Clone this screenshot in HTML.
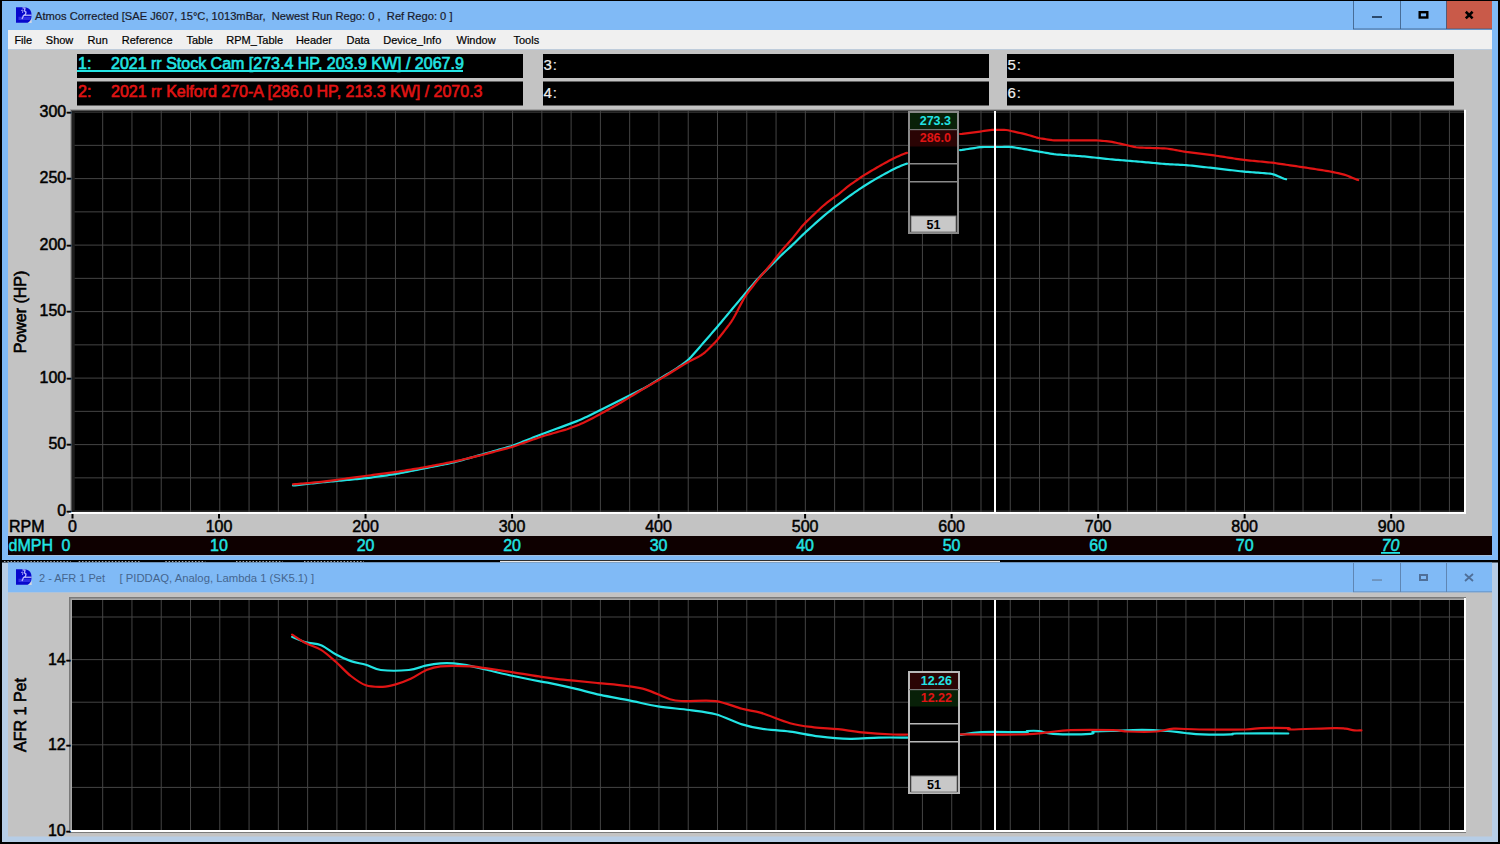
<!DOCTYPE html>
<html><head><meta charset="utf-8"><style>
html,body{margin:0;padding:0;width:1500px;height:844px;overflow:hidden;background:#000}
body{position:relative;font-family:"Liberation Sans",sans-serif}
svg text{font-family:"Liberation Sans",sans-serif}
.m{position:absolute;top:33px;font-size:11px;color:#000;white-space:pre;line-height:14px;-webkit-text-stroke:0.2px #000}
.t{position:absolute;white-space:pre}
</style></head><body>
<svg style="position:absolute;left:0;top:0" width="1500" height="844" viewBox="0 0 1500 844">
<rect x="0" y="0" width="1500" height="844" fill="#000"/>
<rect x="2" y="1" width="1496" height="559" fill="#80baf6"/>
<rect x="1446" y="1" width="46" height="28" fill="#c95a49"/>
<rect x="1353" y="1" width="1" height="28" fill="#3a5a80" opacity="0.8"/>
<rect x="1400" y="1" width="1" height="28" fill="#3a5a80" opacity="0.8"/>
<rect x="1446" y="1" width="1" height="28" fill="#3a5a80" opacity="0.8"/>
<rect x="1353" y="28.5" width="139" height="1" fill="#3a5a80" opacity="0.8"/>
<rect x="1372" y="16" width="10" height="2" fill="#2b4a6e"/>
<rect x="1419.7" y="12.2" width="7.6" height="5.3" fill="none" stroke="#000" stroke-width="2.4"/>
<path d="M1465.8 11.8 L1472.6 18.4 M1472.6 11.8 L1465.8 18.4" stroke="#000" stroke-width="2.6"/>
<rect x="8" y="30" width="1484" height="19.5" fill="#f0f0f0"/>
<rect x="8" y="49.5" width="1484" height="506" fill="#c3c3c3"/>
<rect x="77" y="54" width="446" height="24" fill="#000"/>
<rect x="77" y="81.5" width="446" height="24" fill="#000"/>
<rect x="543" y="54" width="446" height="24" fill="#000"/>
<rect x="543" y="81.5" width="446" height="24" fill="#000"/>
<rect x="1007" y="54" width="447" height="24" fill="#000"/>
<rect x="1007" y="81.5" width="447" height="24" fill="#000"/>
<rect x="70" y="109" width="1396" height="405" fill="#a0a0a0"/>
<rect x="71" y="110" width="1394" height="403" fill="#555"/>
<rect x="72" y="111" width="1392" height="401" fill="#000"/>
<rect x="1464" y="109.5" width="2" height="404.5" fill="#fff"/>
<rect x="69" y="512" width="1397" height="2" fill="#fff"/>
<rect x="102.18" y="111" width="1" height="401" fill="#444444"/>
<rect x="131.45" y="111" width="1" height="401" fill="#444444"/>
<rect x="160.73" y="111" width="1" height="401" fill="#444444"/>
<rect x="190.01" y="111" width="1" height="401" fill="#444444"/>
<rect x="219.28" y="111" width="1" height="401" fill="#444444"/>
<rect x="248.56" y="111" width="1" height="401" fill="#444444"/>
<rect x="277.84" y="111" width="1" height="401" fill="#444444"/>
<rect x="307.12" y="111" width="1" height="401" fill="#444444"/>
<rect x="336.39" y="111" width="1" height="401" fill="#444444"/>
<rect x="365.67" y="111" width="1" height="401" fill="#444444"/>
<rect x="394.95" y="111" width="1" height="401" fill="#444444"/>
<rect x="424.22" y="111" width="1" height="401" fill="#444444"/>
<rect x="453.50" y="111" width="1" height="401" fill="#444444"/>
<rect x="482.78" y="111" width="1" height="401" fill="#444444"/>
<rect x="512.06" y="111" width="1" height="401" fill="#444444"/>
<rect x="541.33" y="111" width="1" height="401" fill="#444444"/>
<rect x="570.61" y="111" width="1" height="401" fill="#444444"/>
<rect x="599.89" y="111" width="1" height="401" fill="#444444"/>
<rect x="629.16" y="111" width="1" height="401" fill="#444444"/>
<rect x="658.44" y="111" width="1" height="401" fill="#444444"/>
<rect x="687.72" y="111" width="1" height="401" fill="#444444"/>
<rect x="716.99" y="111" width="1" height="401" fill="#444444"/>
<rect x="746.27" y="111" width="1" height="401" fill="#444444"/>
<rect x="775.55" y="111" width="1" height="401" fill="#444444"/>
<rect x="804.83" y="111" width="1" height="401" fill="#444444"/>
<rect x="834.10" y="111" width="1" height="401" fill="#444444"/>
<rect x="863.38" y="111" width="1" height="401" fill="#444444"/>
<rect x="892.66" y="111" width="1" height="401" fill="#444444"/>
<rect x="921.93" y="111" width="1" height="401" fill="#444444"/>
<rect x="951.21" y="111" width="1" height="401" fill="#444444"/>
<rect x="980.49" y="111" width="1" height="401" fill="#444444"/>
<rect x="1009.76" y="111" width="1" height="401" fill="#444444"/>
<rect x="1039.04" y="111" width="1" height="401" fill="#444444"/>
<rect x="1068.32" y="111" width="1" height="401" fill="#444444"/>
<rect x="1097.60" y="111" width="1" height="401" fill="#444444"/>
<rect x="1126.87" y="111" width="1" height="401" fill="#444444"/>
<rect x="1156.15" y="111" width="1" height="401" fill="#444444"/>
<rect x="1185.43" y="111" width="1" height="401" fill="#444444"/>
<rect x="1214.70" y="111" width="1" height="401" fill="#444444"/>
<rect x="1243.98" y="111" width="1" height="401" fill="#444444"/>
<rect x="1273.26" y="111" width="1" height="401" fill="#444444"/>
<rect x="1302.53" y="111" width="1" height="401" fill="#444444"/>
<rect x="1331.81" y="111" width="1" height="401" fill="#444444"/>
<rect x="1361.09" y="111" width="1" height="401" fill="#444444"/>
<rect x="1390.37" y="111" width="1" height="401" fill="#444444"/>
<rect x="1419.64" y="111" width="1" height="401" fill="#444444"/>
<rect x="1448.92" y="111" width="1" height="401" fill="#444444"/>
<rect x="72" y="111.60" width="1392" height="1" fill="#444444"/>
<rect x="72" y="144.85" width="1392" height="1" fill="#444444"/>
<rect x="72" y="178.10" width="1392" height="1" fill="#444444"/>
<rect x="72" y="211.35" width="1392" height="1" fill="#444444"/>
<rect x="72" y="244.60" width="1392" height="1" fill="#444444"/>
<rect x="72" y="277.85" width="1392" height="1" fill="#444444"/>
<rect x="72" y="311.10" width="1392" height="1" fill="#444444"/>
<rect x="72" y="344.35" width="1392" height="1" fill="#444444"/>
<rect x="72" y="377.60" width="1392" height="1" fill="#444444"/>
<rect x="72" y="410.85" width="1392" height="1" fill="#444444"/>
<rect x="72" y="444.10" width="1392" height="1" fill="#444444"/>
<rect x="72" y="477.35" width="1392" height="1" fill="#444444"/>
<rect x="72" y="510.60" width="1392" height="1" fill="#444444"/>
<rect x="71" y="110" width="1" height="402" fill="#555"/>
<rect x="72" y="111" width="2.7" height="401" fill="#1e1e1e"/>
<polyline points="293.0,485.46 295.0,485.32 297.0,485.13 299.0,484.91 301.0,484.68 303.0,484.45 305.0,484.22 307.0,483.99 309.0,483.76 311.0,483.53 313.0,483.30 315.0,483.08 317.0,482.85 319.0,482.63 321.0,482.42 323.0,482.22 325.0,482.03 327.0,481.84 329.0,481.66 331.0,481.47 333.0,481.28 335.0,481.09 337.0,480.91 339.0,480.72 341.0,480.53 343.0,480.34 345.0,480.16 347.0,479.97 349.0,479.78 351.0,479.59 353.0,479.41 355.0,479.22 357.0,479.03 359.0,478.84 361.0,478.66 363.0,478.47 365.0,478.27 367.0,478.06 369.0,477.82 371.0,477.56 373.0,477.28 375.0,477.00 377.0,476.71 379.0,476.43 381.0,476.14 383.0,475.86 385.0,475.57 387.0,475.29 389.0,475.00 391.0,474.71 393.0,474.41 395.0,474.10 397.0,473.76 399.0,473.39 401.0,473.00 403.0,472.60 405.0,472.20 407.0,471.80 409.0,471.40 411.0,471.00 413.0,470.60 415.0,470.20 417.0,469.80 419.0,469.40 421.0,469.00 423.0,468.60 425.0,468.20 427.0,467.80 429.0,467.40 431.0,467.00 433.0,466.60 435.0,466.20 437.0,465.80 439.0,465.40 441.0,465.00 443.0,464.60 445.0,464.20 447.0,463.80 449.0,463.40 451.0,462.98 453.0,462.54 455.0,462.06 457.0,461.53 459.0,460.98 461.0,460.42 463.0,459.86 465.0,459.29 467.0,458.72 469.0,458.16 471.0,457.59 473.0,457.03 475.0,456.46 477.0,455.90 479.0,455.33 481.0,454.77 483.0,454.20 485.0,453.63 487.0,453.07 489.0,452.50 491.0,451.94 493.0,451.37 495.0,450.81 497.0,450.24 499.0,449.68 501.0,449.11 503.0,448.54 505.0,447.98 507.0,447.41 509.0,446.82 511.0,446.19 513.0,445.51 515.0,444.77 517.0,443.99 519.0,443.20 521.0,442.40 523.0,441.60 525.0,440.80 527.0,440.00 529.0,439.20 531.0,438.40 533.0,437.60 535.0,436.80 537.0,436.00 539.0,435.21 541.0,434.43 543.0,433.67 545.0,432.93 547.0,432.20 549.0,431.47 551.0,430.75 553.0,430.03 555.0,429.30 557.0,428.58 559.0,427.85 561.0,427.11 563.0,426.37 565.0,425.62 567.0,424.87 569.0,424.12 571.0,423.37 573.0,422.62 575.0,421.87 577.0,421.10 579.0,420.30 581.0,419.44 583.0,418.54 585.0,417.60 587.0,416.65 589.0,415.69 591.0,414.73 593.0,413.76 595.0,412.78 597.0,411.79 599.0,410.80 601.0,409.80 603.0,408.80 605.0,407.80 607.0,406.80 609.0,405.80 611.0,404.80 613.0,403.80 615.0,402.80 617.0,401.80 619.0,400.80 621.0,399.80 623.0,398.80 625.0,397.81 627.0,396.81 629.0,395.81 631.0,394.82 633.0,393.82 635.0,392.83 637.0,391.83 639.0,390.83 641.0,389.83 643.0,388.80 645.0,387.71 647.0,386.57 649.0,385.36 651.0,384.13 653.0,382.88 655.0,381.63 657.0,380.38 659.0,379.14 661.0,377.92 663.0,376.70 665.0,375.49 667.0,374.28 669.0,373.08 671.0,371.87 673.0,370.65 675.0,369.40 677.0,368.10 679.0,366.74 681.0,365.34 683.0,363.90 685.0,362.40 687.0,360.77 689.0,358.94 691.0,356.90 693.0,354.72 695.0,352.47 697.0,350.20 699.0,347.92 701.0,345.64 703.0,343.34 705.0,341.05 707.0,338.75 709.0,336.44 711.0,334.14 713.0,331.83 715.0,329.51 717.0,327.17 719.0,324.81 721.0,322.42 723.0,320.03 725.0,317.63 727.0,315.23 729.0,312.84 731.0,310.44 733.0,308.05 735.0,305.66 737.0,303.27 739.0,300.88 741.0,298.50 743.0,296.11 745.0,293.73 747.0,291.36 749.0,289.00 751.0,286.67 753.0,284.37 755.0,282.10 757.0,279.85 759.0,277.64 761.0,275.50 763.0,273.43 765.0,271.41 767.0,269.40 769.0,267.40 771.0,265.40 773.0,263.40 775.0,261.40 777.0,259.41 779.0,257.44 781.0,255.51 783.0,253.63 785.0,251.80 787.0,249.98 789.0,248.17 791.0,246.32 793.0,244.42 795.0,242.48 797.0,240.50 799.0,238.51 801.0,236.55 803.0,234.63 805.0,232.75 807.0,230.92 809.0,229.10 811.0,227.29 813.0,225.48 815.0,223.68 817.0,221.88 819.0,220.09 821.0,218.32 823.0,216.57 825.0,214.88 827.0,213.24 829.0,211.64 831.0,210.05 833.0,208.49 835.0,206.96 837.0,205.46 839.0,203.97 841.0,202.47 843.0,200.94 845.0,199.41 847.0,197.90 849.0,196.43 851.0,195.01 853.0,193.59 855.0,192.19 857.0,190.79 859.0,189.40 861.0,188.04 863.0,186.73 865.0,185.46 867.0,184.23 869.0,183.02 871.0,181.81 873.0,180.60 875.0,179.41 877.0,178.23 879.0,177.09 881.0,175.97 883.0,174.87 885.0,173.77 887.0,172.68 889.0,171.60 891.0,170.54 893.0,169.52 895.0,168.55 897.0,167.62 899.0,166.72 901.0,165.83 903.0,164.98 905.0,164.23 907.0,163.67" fill="none" stroke="#22e4e4" stroke-width="2.2" stroke-linejoin="round" stroke-linecap="round"/>
<polyline points="960.1,150.08 962.1,149.87 964.1,149.59 966.1,149.28 968.1,148.98 970.1,148.67 972.1,148.36 974.1,148.06 976.1,147.75 978.1,147.45 980.1,147.20 982.1,147.05 984.1,147.01 986.1,147.00 988.1,147.00 990.1,147.00 992.1,147.00 994.1,147.00 996.1,147.00 998.1,147.00 1000.1,147.00 1002.1,146.99 1004.1,146.95 1006.1,146.88 1008.1,146.83 1010.1,146.88 1012.1,147.09 1014.1,147.40 1016.1,147.74 1018.1,148.08 1020.1,148.42 1022.1,148.76 1024.1,149.10 1026.1,149.44 1028.1,149.78 1030.1,150.12 1032.1,150.46 1034.1,150.81 1036.1,151.15 1038.1,151.49 1040.1,151.83 1042.1,152.18 1044.1,152.52 1046.1,152.86 1048.1,153.20 1050.1,153.55 1052.1,153.88 1054.1,154.17 1056.1,154.39 1058.1,154.56 1060.1,154.70 1062.1,154.85 1064.1,154.99 1066.1,155.14 1068.1,155.28 1070.1,155.43 1072.1,155.57 1074.1,155.71 1076.1,155.86 1078.1,156.00 1080.1,156.15 1082.1,156.30 1084.1,156.47 1086.1,156.67 1088.1,156.88 1090.1,157.10 1092.1,157.31 1094.1,157.53 1096.1,157.74 1098.1,157.96 1100.1,158.17 1102.1,158.39 1104.1,158.60 1106.1,158.82 1108.1,159.03 1110.1,159.24 1112.1,159.44 1114.1,159.61 1116.1,159.78 1118.1,159.94 1120.1,160.11 1122.1,160.27 1124.1,160.44 1126.1,160.60 1128.1,160.77 1130.1,160.93 1132.1,161.09 1134.1,161.26 1136.1,161.42 1138.1,161.59 1140.1,161.75 1142.1,161.93 1144.1,162.10 1146.1,162.29 1148.1,162.47 1150.1,162.66 1152.1,162.84 1154.1,163.02 1156.1,163.21 1158.1,163.39 1160.1,163.58 1162.1,163.76 1164.1,163.92 1166.1,164.06 1168.1,164.18 1170.1,164.28 1172.1,164.39 1174.1,164.49 1176.1,164.60 1178.1,164.71 1180.1,164.81 1182.1,164.92 1184.1,165.02 1186.1,165.14 1188.1,165.30 1190.1,165.49 1192.1,165.71 1194.1,165.93 1196.1,166.16 1198.1,166.38 1200.1,166.60 1202.1,166.82 1204.1,167.04 1206.1,167.27 1208.1,167.49 1210.1,167.71 1212.1,167.93 1214.1,168.16 1216.1,168.39 1218.1,168.62 1220.1,168.86 1222.1,169.10 1224.1,169.33 1226.1,169.57 1228.1,169.81 1230.1,170.04 1232.1,170.28 1234.1,170.52 1236.1,170.76 1238.1,170.99 1240.1,171.23 1242.1,171.45 1244.1,171.65 1246.1,171.82 1248.1,171.97 1250.1,172.12 1252.1,172.27 1254.1,172.42 1256.1,172.57 1258.1,172.72 1260.1,172.87 1262.1,173.02 1264.1,173.17 1266.1,173.33 1268.1,173.48 1270.1,173.67 1272.1,174.01 1274.1,174.60 1276.1,175.38 1278.1,176.22 1280.1,177.07 1282.1,177.91 1284.1,178.70 1286.1,179.28" fill="none" stroke="#22e4e4" stroke-width="2.2" stroke-linejoin="round" stroke-linecap="round"/>
<polyline points="293.0,484.29 295.0,484.18 297.0,484.03 299.0,483.86 301.0,483.69 303.0,483.51 305.0,483.33 307.0,483.16 309.0,482.98 311.0,482.80 313.0,482.62 315.0,482.44 317.0,482.26 319.0,482.06 321.0,481.84 323.0,481.60 325.0,481.35 327.0,481.09 329.0,480.83 331.0,480.57 333.0,480.31 335.0,480.05 337.0,479.79 339.0,479.53 341.0,479.26 343.0,478.99 345.0,478.72 347.0,478.45 349.0,478.18 351.0,477.91 353.0,477.64 355.0,477.36 357.0,477.09 359.0,476.82 361.0,476.55 363.0,476.28 365.0,476.01 367.0,475.74 369.0,475.48 371.0,475.22 373.0,474.96 375.0,474.70 377.0,474.44 379.0,474.19 381.0,473.93 383.0,473.67 385.0,473.41 387.0,473.16 389.0,472.90 391.0,472.64 393.0,472.38 395.0,472.10 397.0,471.81 399.0,471.50 401.0,471.18 403.0,470.85 405.0,470.52 407.0,470.19 409.0,469.86 411.0,469.54 413.0,469.21 415.0,468.88 417.0,468.55 419.0,468.22 421.0,467.89 423.0,467.54 425.0,467.18 427.0,466.81 429.0,466.43 431.0,466.05 433.0,465.66 435.0,465.27 437.0,464.89 439.0,464.50 441.0,464.11 443.0,463.73 445.0,463.34 447.0,462.95 449.0,462.56 451.0,462.17 453.0,461.76 455.0,461.33 457.0,460.88 459.0,460.42 461.0,459.95 463.0,459.48 465.0,459.01 467.0,458.54 469.0,458.06 471.0,457.59 473.0,457.12 475.0,456.65 477.0,456.18 479.0,455.70 481.0,455.21 483.0,454.71 485.0,454.19 487.0,453.66 489.0,453.13 491.0,452.60 493.0,452.07 495.0,451.53 497.0,451.00 499.0,450.47 501.0,449.93 503.0,449.40 505.0,448.87 507.0,448.33 509.0,447.78 511.0,447.20 513.0,446.58 515.0,445.92 517.0,445.23 519.0,444.53 521.0,443.82 523.0,443.11 525.0,442.41 527.0,441.70 529.0,440.99 531.0,440.29 533.0,439.58 535.0,438.87 537.0,438.17 539.0,437.48 541.0,436.81 543.0,436.17 545.0,435.56 547.0,434.98 549.0,434.41 551.0,433.84 553.0,433.27 555.0,432.70 557.0,432.13 559.0,431.56 561.0,430.99 563.0,430.42 565.0,429.83 567.0,429.21 569.0,428.54 571.0,427.83 573.0,427.08 575.0,426.31 577.0,425.52 579.0,424.70 581.0,423.82 583.0,422.89 585.0,421.93 587.0,420.95 589.0,419.96 591.0,418.96 593.0,417.95 595.0,416.90 597.0,415.83 599.0,414.73 601.0,413.63 603.0,412.53 605.0,411.42 607.0,410.32 609.0,409.21 611.0,408.11 613.0,407.00 615.0,405.89 617.0,404.77 619.0,403.64 621.0,402.47 623.0,401.28 625.0,400.07 627.0,398.85 629.0,397.63 631.0,396.41 633.0,395.20 635.0,393.98 637.0,392.76 639.0,391.54 641.0,390.32 643.0,389.12 645.0,387.92 647.0,386.75 649.0,385.59 651.0,384.44 653.0,383.30 655.0,382.15 657.0,381.00 659.0,379.83 661.0,378.64 663.0,377.43 665.0,376.19 667.0,374.96 669.0,373.72 671.0,372.48 673.0,371.24 675.0,370.00 677.0,368.76 679.0,367.53 681.0,366.31 683.0,365.09 685.0,363.88 687.0,362.71 689.0,361.59 691.0,360.52 693.0,359.49 695.0,358.48 697.0,357.46 699.0,356.41 701.0,355.25 703.0,353.89 705.0,352.28 707.0,350.46 709.0,348.53 711.0,346.55 713.0,344.52 715.0,342.42 717.0,340.18 719.0,337.78 721.0,335.27 723.0,332.71 725.0,330.12 727.0,327.52 729.0,324.86 731.0,322.06 733.0,318.98 735.0,315.52 737.0,311.77 739.0,307.85 741.0,303.94 743.0,300.20 745.0,296.78 747.0,293.76 749.0,291.03 751.0,288.46 753.0,285.95 755.0,283.43 757.0,280.90 759.0,278.38 761.0,275.92 763.0,273.53 765.0,271.21 767.0,268.89 769.0,266.55 771.0,264.13 773.0,261.62 775.0,259.05 777.0,256.46 779.0,253.90 781.0,251.42 783.0,249.06 785.0,246.79 787.0,244.56 789.0,242.33 791.0,240.04 793.0,237.65 795.0,235.15 797.0,232.60 799.0,230.06 801.0,227.59 803.0,225.28 805.0,223.14 807.0,221.14 809.0,219.20 811.0,217.29 813.0,215.39 815.0,213.48 817.0,211.57 819.0,209.68 821.0,207.81 823.0,206.01 825.0,204.31 827.0,202.71 829.0,201.17 831.0,199.68 833.0,198.20 835.0,196.73 837.0,195.27 839.0,193.76 841.0,192.18 843.0,190.52 845.0,188.84 847.0,187.22 849.0,185.68 851.0,184.22 853.0,182.80 855.0,181.39 857.0,179.99 859.0,178.60 861.0,177.25 863.0,175.94 865.0,174.68 867.0,173.46 869.0,172.26 871.0,171.06 873.0,169.87 875.0,168.69 877.0,167.52 879.0,166.37 881.0,165.24 883.0,164.13 885.0,163.03 887.0,161.92 889.0,160.83 891.0,159.76 893.0,158.73 895.0,157.75 897.0,156.82 899.0,155.92 901.0,155.03 903.0,154.18 905.0,153.43 907.0,152.87" fill="none" stroke="#e01414" stroke-width="2.2" stroke-linejoin="round" stroke-linecap="round"/>
<polyline points="960.1,134.00 962.1,133.84 964.1,133.61 966.1,133.37 968.1,133.13 970.1,132.88 972.1,132.64 974.1,132.40 976.1,132.15 978.1,131.89 980.1,131.60 982.1,131.28 984.1,130.95 986.1,130.62 988.1,130.30 990.1,130.06 992.1,129.94 994.1,129.90 996.1,129.90 998.1,129.90 1000.1,129.90 1002.1,129.90 1004.1,129.91 1006.1,130.00 1008.1,130.28 1010.1,130.75 1012.1,131.23 1014.1,131.68 1016.1,132.12 1018.1,132.55 1020.1,132.98 1022.1,133.41 1024.1,133.87 1026.1,134.38 1028.1,134.94 1030.1,135.54 1032.1,136.13 1034.1,136.73 1036.1,137.31 1038.1,137.82 1040.1,138.23 1042.1,138.57 1044.1,138.90 1046.1,139.23 1048.1,139.56 1050.1,139.88 1052.1,140.16 1054.1,140.33 1056.1,140.39 1058.1,140.40 1060.1,140.40 1062.1,140.40 1064.1,140.40 1066.1,140.40 1068.1,140.40 1070.1,140.40 1072.1,140.40 1074.1,140.40 1076.1,140.40 1078.1,140.40 1080.1,140.40 1082.1,140.40 1084.1,140.40 1086.1,140.40 1088.1,140.40 1090.1,140.40 1092.1,140.40 1094.1,140.40 1096.1,140.43 1098.1,140.51 1100.1,140.65 1102.1,140.83 1104.1,141.01 1106.1,141.20 1108.1,141.39 1110.1,141.61 1112.1,141.91 1114.1,142.31 1116.1,142.76 1118.1,143.21 1120.1,143.67 1122.1,144.13 1124.1,144.59 1126.1,145.05 1128.1,145.51 1130.1,145.96 1132.1,146.42 1134.1,146.86 1136.1,147.24 1138.1,147.48 1140.1,147.60 1142.1,147.67 1144.1,147.74 1146.1,147.81 1148.1,147.87 1150.1,147.94 1152.1,148.00 1154.1,148.07 1156.1,148.13 1158.1,148.20 1160.1,148.27 1162.1,148.33 1164.1,148.41 1166.1,148.52 1168.1,148.73 1170.1,149.05 1172.1,149.41 1174.1,149.78 1176.1,150.15 1178.1,150.52 1180.1,150.89 1182.1,151.26 1184.1,151.61 1186.1,151.92 1188.1,152.18 1190.1,152.44 1192.1,152.69 1194.1,152.94 1196.1,153.19 1198.1,153.44 1200.1,153.69 1202.1,153.94 1204.1,154.19 1206.1,154.44 1208.1,154.69 1210.1,154.94 1212.1,155.19 1214.1,155.45 1216.1,155.72 1218.1,156.02 1220.1,156.33 1222.1,156.64 1224.1,156.95 1226.1,157.26 1228.1,157.56 1230.1,157.87 1232.1,158.18 1234.1,158.49 1236.1,158.80 1238.1,159.11 1240.1,159.42 1242.1,159.71 1244.1,159.96 1246.1,160.17 1248.1,160.37 1250.1,160.56 1252.1,160.75 1254.1,160.95 1256.1,161.14 1258.1,161.33 1260.1,161.52 1262.1,161.71 1264.1,161.90 1266.1,162.10 1268.1,162.29 1270.1,162.49 1272.1,162.71 1274.1,162.96 1276.1,163.25 1278.1,163.54 1280.1,163.84 1282.1,164.13 1284.1,164.43 1286.1,164.72 1288.1,165.02 1290.1,165.32 1292.1,165.61 1294.1,165.91 1296.1,166.20 1298.1,166.50 1300.1,166.79 1302.1,167.10 1304.1,167.40 1306.1,167.71 1308.1,168.02 1310.1,168.33 1312.1,168.63 1314.1,168.94 1316.1,169.25 1318.1,169.56 1320.1,169.87 1322.1,170.17 1324.1,170.48 1326.1,170.79 1328.1,171.12 1330.1,171.48 1332.1,171.89 1334.1,172.32 1336.1,172.75 1338.1,173.19 1340.1,173.62 1342.1,174.08 1344.1,174.61 1346.1,175.27 1348.1,176.06 1350.1,176.88 1352.1,177.71 1354.1,178.54 1356.1,179.34 1358.1,180.04" fill="none" stroke="#e01414" stroke-width="2.2" stroke-linejoin="round" stroke-linecap="round"/>
<rect x="994" y="111" width="2" height="401" fill="#fff"/>
<rect x="909" y="112" width="49" height="121" fill="#000" stroke="#8a8a8a" stroke-width="2"/>
<rect x="910" y="113" width="47" height="16.5" fill="#082008"/>
<rect x="910" y="130" width="47" height="16.5" fill="#2a0404"/>
<rect x="909" y="129" width="49" height="1.2" fill="#777"/>
<rect x="909" y="163" width="49" height="1.5" fill="#8a8a8a"/>
<rect x="909" y="181" width="49" height="1.5" fill="#8a8a8a"/>
<rect x="911" y="216" width="45" height="16" fill="#c8c8c8" stroke="#7a7a7a" stroke-width="1"/>
<text x="951" y="125" font-size="12.5" font-weight="700" fill="#22e4e4" text-anchor="end" >273.3</text>
<text x="951" y="142" font-size="12.5" font-weight="700" fill="#e01414" text-anchor="end" >286.0</text>
<text x="933.5" y="229" font-size="12.5" font-weight="700" fill="#000" text-anchor="middle" >51</text>
<text x="71.6" y="116.5" font-size="16" font-weight="400" fill="#000" text-anchor="end" stroke="#000" stroke-width="0.5">300-</text>
<text x="71.6" y="183.0" font-size="16" font-weight="400" fill="#000" text-anchor="end" stroke="#000" stroke-width="0.5">250-</text>
<text x="71.6" y="249.5" font-size="16" font-weight="400" fill="#000" text-anchor="end" stroke="#000" stroke-width="0.5">200-</text>
<text x="71.6" y="316.0" font-size="16" font-weight="400" fill="#000" text-anchor="end" stroke="#000" stroke-width="0.5">150-</text>
<text x="71.6" y="382.5" font-size="16" font-weight="400" fill="#000" text-anchor="end" stroke="#000" stroke-width="0.5">100-</text>
<text x="71.6" y="449.0" font-size="16" font-weight="400" fill="#000" text-anchor="end" stroke="#000" stroke-width="0.5">50-</text>
<text x="71.6" y="515.5" font-size="16" font-weight="400" fill="#000" text-anchor="end" stroke="#000" stroke-width="0.5">0-</text>
<text x="0" y="0" font-size="16" font-weight="400" fill="#000" text-anchor="middle" stroke="#000" stroke-width="0.6" transform="translate(25.5 312) rotate(-90)">Power (HP)</text>
<rect x="71.50" y="514" width="2" height="4.5" fill="#000"/>
<text x="72.50" y="532.3" font-size="16" font-weight="400" fill="#000" text-anchor="middle" stroke="#000" stroke-width="0.5">0</text>
<rect x="218.02" y="514" width="2" height="4.5" fill="#000"/>
<text x="219.02" y="532.3" font-size="16" font-weight="400" fill="#000" text-anchor="middle" stroke="#000" stroke-width="0.5">100</text>
<rect x="364.54" y="514" width="2" height="4.5" fill="#000"/>
<text x="365.54" y="532.3" font-size="16" font-weight="400" fill="#000" text-anchor="middle" stroke="#000" stroke-width="0.5">200</text>
<rect x="511.06" y="514" width="2" height="4.5" fill="#000"/>
<text x="512.06" y="532.3" font-size="16" font-weight="400" fill="#000" text-anchor="middle" stroke="#000" stroke-width="0.5">300</text>
<rect x="657.58" y="514" width="2" height="4.5" fill="#000"/>
<text x="658.58" y="532.3" font-size="16" font-weight="400" fill="#000" text-anchor="middle" stroke="#000" stroke-width="0.5">400</text>
<rect x="804.10" y="514" width="2" height="4.5" fill="#000"/>
<text x="805.10" y="532.3" font-size="16" font-weight="400" fill="#000" text-anchor="middle" stroke="#000" stroke-width="0.5">500</text>
<rect x="950.62" y="514" width="2" height="4.5" fill="#000"/>
<text x="951.62" y="532.3" font-size="16" font-weight="400" fill="#000" text-anchor="middle" stroke="#000" stroke-width="0.5">600</text>
<rect x="1097.14" y="514" width="2" height="4.5" fill="#000"/>
<text x="1098.14" y="532.3" font-size="16" font-weight="400" fill="#000" text-anchor="middle" stroke="#000" stroke-width="0.5">700</text>
<rect x="1243.66" y="514" width="2" height="4.5" fill="#000"/>
<text x="1244.66" y="532.3" font-size="16" font-weight="400" fill="#000" text-anchor="middle" stroke="#000" stroke-width="0.5">800</text>
<rect x="1390.18" y="514" width="2" height="4.5" fill="#000"/>
<text x="1391.18" y="532.3" font-size="16" font-weight="400" fill="#000" text-anchor="middle" stroke="#000" stroke-width="0.5">900</text>
<text x="9" y="532.3" font-size="16" font-weight="400" fill="#000" text-anchor="start" stroke="#000" stroke-width="0.5">RPM</text>
<rect x="8" y="536" width="1484" height="19" fill="#0e0000"/>
<text x="8.5" y="550.8" font-size="16" font-weight="400" fill="#22e4e4" text-anchor="start" stroke="#22e4e4" stroke-width="0.45">dMPH</text>
<text x="66.00" y="550.8" font-size="16" font-weight="400" fill="#22e4e4" text-anchor="middle" stroke="#22e4e4" stroke-width="0.45">0</text>
<text x="219.02" y="550.8" font-size="16" font-weight="400" fill="#22e4e4" text-anchor="middle" stroke="#22e4e4" stroke-width="0.45">10</text>
<text x="365.54" y="550.8" font-size="16" font-weight="400" fill="#22e4e4" text-anchor="middle" stroke="#22e4e4" stroke-width="0.45">20</text>
<text x="512.06" y="550.8" font-size="16" font-weight="400" fill="#22e4e4" text-anchor="middle" stroke="#22e4e4" stroke-width="0.45">20</text>
<text x="658.58" y="550.8" font-size="16" font-weight="400" fill="#22e4e4" text-anchor="middle" stroke="#22e4e4" stroke-width="0.45">30</text>
<text x="805.10" y="550.8" font-size="16" font-weight="400" fill="#22e4e4" text-anchor="middle" stroke="#22e4e4" stroke-width="0.45">40</text>
<text x="951.62" y="550.8" font-size="16" font-weight="400" fill="#22e4e4" text-anchor="middle" stroke="#22e4e4" stroke-width="0.45">50</text>
<text x="1098.14" y="550.8" font-size="16" font-weight="400" fill="#22e4e4" text-anchor="middle" stroke="#22e4e4" stroke-width="0.45">60</text>
<text x="1244.66" y="550.8" font-size="16" font-weight="400" fill="#22e4e4" text-anchor="middle" stroke="#22e4e4" stroke-width="0.45">70</text>
<text x="1390.5" y="550.8" font-size="16" font-weight="400" fill="#22e4e4" text-anchor="middle" font-style="italic" stroke="#22e4e4" stroke-width="0.45">70</text>
<rect x="1381" y="552" width="19" height="1.8" fill="#22e4e4"/>
<rect x="0" y="560" width="1500" height="2.5" fill="#000"/>
<rect x="500" y="560.8" width="500" height="1.5" fill="#e8e8e8"/>
<line x1="4" y1="561.5" x2="70.7" y2="561.5" stroke="#d0d8e0" stroke-width="1" stroke-dasharray="1.5 1.8" opacity="0.8"/>
<line x1="78.7" y1="561.5" x2="141.3" y2="561.5" stroke="#d0d8e0" stroke-width="1" stroke-dasharray="1.5 1.8" opacity="0.8"/>
<line x1="165.3" y1="561.5" x2="205.3" y2="561.5" stroke="#d0d8e0" stroke-width="1" stroke-dasharray="1.5 1.8" opacity="0.8"/>
<line x1="236" y1="561.5" x2="282.7" y2="561.5" stroke="#d0d8e0" stroke-width="1" stroke-dasharray="1.5 1.8" opacity="0.8"/>
<line x1="304" y1="561.5" x2="364" y2="561.5" stroke="#d0d8e0" stroke-width="1" stroke-dasharray="1.5 1.8" opacity="0.8"/>
<rect x="2" y="562.5" width="1496" height="279.5" fill="#b6cde6"/>
<rect x="8" y="562.5" width="1484" height="30" fill="#80baf6"/>
<rect x="1353" y="563" width="1" height="29" fill="#5f86b3"/>
<rect x="1400" y="563" width="1" height="29" fill="#5f86b3"/>
<rect x="1446" y="563" width="1" height="29" fill="#5f86b3"/>
<rect x="1353" y="591.5" width="139" height="1" fill="#5f86b3"/>
<rect x="1372" y="579.3" width="10" height="1.5" fill="#6a8ab0"/>
<rect x="1420" y="575" width="7" height="5" fill="none" stroke="#4f6f98" stroke-width="2"/>
<path d="M1465 574 L1473 581 M1473 574 L1465 581" stroke="#4f6f98" stroke-width="1.8"/>
<rect x="8" y="592.5" width="1484" height="244" fill="#c3c3c3"/>
<rect x="69" y="597" width="1397" height="236" fill="#7a7a7a"/>
<rect x="70.5" y="598.5" width="1395" height="233" fill="#a8a8a8"/>
<rect x="72" y="600" width="1392" height="230" fill="#000"/>
<rect x="1464" y="598" width="2" height="234" fill="#fff"/>
<rect x="70" y="830" width="1396" height="2" fill="#fff"/>
<rect x="102.18" y="600" width="1" height="230" fill="#444444"/>
<rect x="131.45" y="600" width="1" height="230" fill="#444444"/>
<rect x="160.73" y="600" width="1" height="230" fill="#444444"/>
<rect x="190.01" y="600" width="1" height="230" fill="#444444"/>
<rect x="219.28" y="600" width="1" height="230" fill="#444444"/>
<rect x="248.56" y="600" width="1" height="230" fill="#444444"/>
<rect x="277.84" y="600" width="1" height="230" fill="#444444"/>
<rect x="307.12" y="600" width="1" height="230" fill="#444444"/>
<rect x="336.39" y="600" width="1" height="230" fill="#444444"/>
<rect x="365.67" y="600" width="1" height="230" fill="#444444"/>
<rect x="394.95" y="600" width="1" height="230" fill="#444444"/>
<rect x="424.22" y="600" width="1" height="230" fill="#444444"/>
<rect x="453.50" y="600" width="1" height="230" fill="#444444"/>
<rect x="482.78" y="600" width="1" height="230" fill="#444444"/>
<rect x="512.06" y="600" width="1" height="230" fill="#444444"/>
<rect x="541.33" y="600" width="1" height="230" fill="#444444"/>
<rect x="570.61" y="600" width="1" height="230" fill="#444444"/>
<rect x="599.89" y="600" width="1" height="230" fill="#444444"/>
<rect x="629.16" y="600" width="1" height="230" fill="#444444"/>
<rect x="658.44" y="600" width="1" height="230" fill="#444444"/>
<rect x="687.72" y="600" width="1" height="230" fill="#444444"/>
<rect x="716.99" y="600" width="1" height="230" fill="#444444"/>
<rect x="746.27" y="600" width="1" height="230" fill="#444444"/>
<rect x="775.55" y="600" width="1" height="230" fill="#444444"/>
<rect x="804.83" y="600" width="1" height="230" fill="#444444"/>
<rect x="834.10" y="600" width="1" height="230" fill="#444444"/>
<rect x="863.38" y="600" width="1" height="230" fill="#444444"/>
<rect x="892.66" y="600" width="1" height="230" fill="#444444"/>
<rect x="921.93" y="600" width="1" height="230" fill="#444444"/>
<rect x="951.21" y="600" width="1" height="230" fill="#444444"/>
<rect x="980.49" y="600" width="1" height="230" fill="#444444"/>
<rect x="1009.76" y="600" width="1" height="230" fill="#444444"/>
<rect x="1039.04" y="600" width="1" height="230" fill="#444444"/>
<rect x="1068.32" y="600" width="1" height="230" fill="#444444"/>
<rect x="1097.60" y="600" width="1" height="230" fill="#444444"/>
<rect x="1126.87" y="600" width="1" height="230" fill="#444444"/>
<rect x="1156.15" y="600" width="1" height="230" fill="#444444"/>
<rect x="1185.43" y="600" width="1" height="230" fill="#444444"/>
<rect x="1214.70" y="600" width="1" height="230" fill="#444444"/>
<rect x="1243.98" y="600" width="1" height="230" fill="#444444"/>
<rect x="1273.26" y="600" width="1" height="230" fill="#444444"/>
<rect x="1302.53" y="600" width="1" height="230" fill="#444444"/>
<rect x="1331.81" y="600" width="1" height="230" fill="#444444"/>
<rect x="1361.09" y="600" width="1" height="230" fill="#444444"/>
<rect x="1390.37" y="600" width="1" height="230" fill="#444444"/>
<rect x="1419.64" y="600" width="1" height="230" fill="#444444"/>
<rect x="1448.92" y="600" width="1" height="230" fill="#444444"/>
<rect x="72" y="616.50" width="1392" height="1" fill="#444444"/>
<rect x="72" y="659.10" width="1392" height="1" fill="#444444"/>
<rect x="72" y="701.70" width="1392" height="1" fill="#444444"/>
<rect x="72" y="744.30" width="1392" height="1" fill="#444444"/>
<rect x="72" y="786.90" width="1392" height="1" fill="#444444"/>
<path d="M292.10,636.80 C294.43,637.73 301.27,641.00 306.10,642.40 C310.93,643.80 316.12,643.18 321.10,645.20 C326.08,647.22 331.03,651.85 336.00,654.50 C340.97,657.15 345.92,659.38 350.90,661.10 C355.88,662.82 360.92,663.32 365.90,664.80 C370.88,666.28 373.65,669.13 380.80,670.00 C387.95,670.87 401.33,670.72 408.80,670.00 C416.27,669.28 420.32,666.82 425.60,665.70 C430.88,664.58 435.83,663.70 440.50,663.30 C445.17,662.90 449.23,662.98 453.60,663.30 C457.97,663.62 461.42,664.17 466.70,665.20 C471.98,666.23 477.53,667.70 485.30,669.50 C493.07,671.30 503.97,673.98 513.30,676.00 C522.63,678.02 535.18,680.42 541.30,681.60 C547.42,682.78 544.55,681.97 550.00,683.10 C555.45,684.23 565.60,686.43 574.00,688.40 C582.40,690.37 591.20,692.90 600.40,694.90 C609.60,696.90 619.60,698.48 629.20,700.40 C638.80,702.32 648.00,704.80 658.00,706.40 C668.00,708.00 679.60,708.68 689.20,710.00 C698.80,711.32 706.80,711.90 715.60,714.30 C724.40,716.70 734.40,722.00 742.00,724.40 C749.60,726.80 753.20,727.50 761.20,728.70 C769.20,729.90 780.40,730.32 790.00,731.60 C799.60,732.88 808.80,735.20 818.80,736.40 C828.80,737.60 840.00,738.60 850.00,738.80 C860.00,739.00 869.20,737.80 878.80,737.60 C888.40,737.40 902.80,737.60 907.60,737.60" fill="none" stroke="#22e4e4" stroke-width="2.2" stroke-linejoin="round" stroke-linecap="round"/>
<path d="M960.00,735.00 C963.58,734.52 970.75,732.58 981.50,732.10 C992.25,731.62 1016.85,732.28 1024.50,732.10 C1032.15,731.92 1025.00,731.18 1027.40,731.00 C1029.80,730.82 1034.60,730.53 1038.90,731.00 C1043.20,731.47 1044.60,733.33 1053.20,733.80 C1061.80,734.27 1083.82,734.18 1090.50,733.80 C1097.18,733.42 1089.97,731.97 1093.30,731.50 C1096.63,731.03 1102.38,731.28 1110.50,731.00 C1118.62,730.72 1132.43,729.80 1142.00,729.80 C1151.57,729.80 1160.72,730.47 1167.90,731.00 C1175.08,731.53 1179.37,732.43 1185.10,733.00 C1190.83,733.57 1194.65,734.17 1202.30,734.40 C1209.95,734.63 1225.27,734.55 1231.00,734.40 C1236.73,734.25 1227.15,733.65 1236.70,733.50 C1246.25,733.35 1279.70,733.50 1288.30,733.50" fill="none" stroke="#22e4e4" stroke-width="2.2" stroke-linejoin="round" stroke-linecap="round"/>
<path d="M292.10,634.60 C294.43,636.05 301.27,640.75 306.10,643.30 C310.93,645.85 316.12,646.78 321.10,649.90 C326.08,653.02 331.03,657.65 336.00,662.00 C340.97,666.35 345.92,672.12 350.90,676.00 C355.88,679.88 360.60,683.50 365.90,685.30 C371.20,687.10 377.73,686.95 382.70,686.80 C387.67,686.65 391.03,685.73 395.70,684.40 C400.37,683.07 405.72,681.13 410.70,678.80 C415.68,676.47 420.63,672.48 425.60,670.40 C430.57,668.32 433.03,666.98 440.50,666.30 C447.97,665.62 462.93,665.98 470.40,666.30 C477.87,666.62 478.15,667.20 485.30,668.20 C492.45,669.20 503.97,670.85 513.30,672.30 C522.63,673.75 533.52,675.72 541.30,676.90 C549.08,678.08 554.55,678.77 560.00,679.40 C565.45,680.03 567.67,680.08 574.00,680.70 C580.33,681.32 589.20,682.22 598.00,683.10 C606.80,683.98 618.80,684.92 626.80,686.00 C634.80,687.08 638.80,687.40 646.00,689.60 C653.20,691.80 663.60,697.28 670.00,699.20 C676.40,701.12 676.80,700.78 684.40,701.10 C692.00,701.42 706.00,699.82 715.60,701.10 C725.20,702.38 734.40,706.83 742.00,708.80 C749.60,710.77 753.20,710.50 761.20,712.90 C769.20,715.30 781.20,720.80 790.00,723.20 C798.80,725.60 806.00,726.30 814.00,727.30 C822.00,728.30 830.00,728.37 838.00,729.20 C846.00,730.03 852.80,731.42 862.00,732.30 C871.20,733.18 885.60,734.13 893.20,734.50 C900.80,734.87 905.20,734.50 907.60,734.50" fill="none" stroke="#e01414" stroke-width="2.2" stroke-linejoin="round" stroke-linecap="round"/>
<path d="M960.00,734.40 C970.75,734.40 1009.92,734.73 1024.50,734.40 C1039.08,734.07 1039.85,733.12 1047.50,732.40 C1055.15,731.68 1059.42,730.48 1070.40,730.10 C1081.38,729.72 1103.83,729.87 1113.40,730.10 C1122.97,730.33 1120.63,731.27 1127.80,731.50 C1134.97,731.73 1148.77,731.97 1156.40,731.50 C1164.03,731.03 1166.43,729.03 1173.60,728.70 C1180.77,728.37 1187.45,729.37 1199.40,729.50 C1211.35,729.63 1235.02,729.73 1245.30,729.50 C1255.58,729.27 1253.93,728.33 1261.10,728.10 C1268.27,727.87 1283.28,727.87 1288.30,728.10 C1293.32,728.33 1283.55,729.50 1291.20,729.50 C1298.85,729.50 1325.13,728.23 1334.20,728.10 C1343.27,727.97 1342.27,728.32 1345.60,728.70 C1348.93,729.08 1351.57,730.12 1354.20,730.40 C1356.83,730.68 1360.20,730.40 1361.40,730.40" fill="none" stroke="#e01414" stroke-width="2.2" stroke-linejoin="round" stroke-linecap="round"/>
<rect x="994" y="600" width="2" height="230" fill="#fff"/>
<rect x="909" y="672" width="50" height="121" fill="#000" stroke="#b8b8b8" stroke-width="2"/>
<rect x="910" y="673" width="48" height="16.5" fill="#2a0404"/>
<rect x="910" y="690" width="48" height="16.5" fill="#082008"/>
<rect x="909" y="689" width="50" height="1.2" fill="#777"/>
<rect x="909" y="723" width="50" height="1.5" fill="#b8b8b8"/>
<rect x="909" y="741" width="50" height="1.5" fill="#b8b8b8"/>
<rect x="911" y="776" width="46" height="16" fill="#c8c8c8" stroke="#7a7a7a" stroke-width="1"/>
<text x="952" y="685" font-size="12.5" font-weight="700" fill="#22e4e4" text-anchor="end" >12.26</text>
<text x="952" y="702" font-size="12.5" font-weight="700" fill="#e01414" text-anchor="end" >12.22</text>
<text x="934.0" y="789" font-size="12.5" font-weight="700" fill="#000" text-anchor="middle" >51</text>
<text x="71" y="664.9000000000001" font-size="16" font-weight="400" fill="#000" text-anchor="end" stroke="#000" stroke-width="0.5">14-</text>
<text x="71" y="750.0" font-size="16" font-weight="400" fill="#000" text-anchor="end" stroke="#000" stroke-width="0.5">12-</text>
<text x="71" y="835.5" font-size="16" font-weight="400" fill="#000" text-anchor="end" stroke="#000" stroke-width="0.5">10-</text>
<text x="0" y="0" font-size="16" font-weight="400" fill="#000" text-anchor="middle" stroke="#000" stroke-width="0.6" transform="translate(25.5 715) rotate(-90)">AFR 1 Pet</text>
</svg>
<svg style="position:absolute;left:16px;top:6.7px" width="16" height="16" viewBox="0 0 16 16">
<path d="M12 15.8 L15.6 12 V16 Z" fill="#d8d8e0"/>
<path d="M0 0.2 H9.5 Q15.6 1.5 15.6 8 Q15.4 14.5 11.5 15.8 H0 Z" fill="#0808cc"/>
<path d="M2.5 9.8 H15 Q14.6 12 13.6 13 H2.5 Z" fill="#3434e8" opacity="0.9"/>
<path d="M8 8.2 H15.6" stroke="#e8e8ff" stroke-width="1"/>
<path d="M6.5 0.8 L9 1 L8.5 4 L10 5 L9.5 7.5 L7.5 8.5 L6 12" stroke="#b8b8ff" stroke-width="1.3" fill="none"/>
<path d="M5 3.5 L7 3 L6.5 6" stroke="#9090f0" stroke-width="1" fill="none"/>
</svg>
<svg style="position:absolute;left:16px;top:569.3px" width="16" height="16" viewBox="0 0 16 16">
<path d="M12 15.8 L15.6 12 V16 Z" fill="#d8d8e0"/>
<path d="M0 0.2 H9.5 Q15.6 1.5 15.6 8 Q15.4 14.5 11.5 15.8 H0 Z" fill="#0808cc"/>
<path d="M2.5 9.8 H15 Q14.6 12 13.6 13 H2.5 Z" fill="#3434e8" opacity="0.9"/>
<path d="M8 8.2 H15.6" stroke="#e8e8ff" stroke-width="1"/>
<path d="M6.5 0.8 L9 1 L8.5 4 L10 5 L9.5 7.5 L7.5 8.5 L6 12" stroke="#b8b8ff" stroke-width="1.3" fill="none"/>
<path d="M5 3.5 L7 3 L6.5 6" stroke="#9090f0" stroke-width="1" fill="none"/>
</svg>
<div class="t" style="left:35px;top:7.5px;font-size:11.15px;line-height:16px;color:#1a1a2a;-webkit-text-stroke:0.2px #1a1a2a">Atmos Corrected [SAE J607, 15°C, 1013mBar,  Newest Run Rego: 0 ,  Ref Rego: 0 ]</div>
<span class="m" style="left:14.4px">File</span><span class="m" style="left:45.8px">Show</span><span class="m" style="left:87.6px">Run</span><span class="m" style="left:121.8px">Reference</span><span class="m" style="left:186.5px">Table</span><span class="m" style="left:226.3px">RPM_Table</span><span class="m" style="left:295.9px">Header</span><span class="m" style="left:346.5px">Data</span><span class="m" style="left:383.2px">Device_Info</span><span class="m" style="left:456.5px">Window</span><span class="m" style="left:513.5px">Tools</span>
<div class="t" style="left:78px;top:55px;font-size:16px;line-height:18px;font-weight:400;-webkit-text-stroke:0.6px #22e4e4;color:#22e4e4">1:</div>
<div class="t" style="left:111px;top:55px;font-size:16px;line-height:18px;font-weight:400;-webkit-text-stroke:0.6px #22e4e4;color:#22e4e4">2021 rr Stock Cam [273.4 HP, 203.9 KW] / 2067.9</div>
<div style="position:absolute;left:77px;top:70.4px;width:386px;height:2px;background:#22e4e4"></div>
<div class="t" style="left:78px;top:83.2px;font-size:16px;line-height:18px;font-weight:400;-webkit-text-stroke:0.6px #e01414;color:#e01414">2:</div>
<div class="t" style="left:111px;top:83.2px;font-size:16px;line-height:18px;font-weight:400;-webkit-text-stroke:0.6px #e01414;color:#e01414">2021 rr Kelford 270-A [286.0 HP, 213.3 KW] / 2070.3</div>
<div class="t" style="left:543.5px;top:55px;font-size:15px;line-height:19px;color:#eeeeee;-webkit-text-stroke:0.2px #eeeeee;letter-spacing:1px">3:</div>
<div class="t" style="left:543.5px;top:83px;font-size:15px;line-height:19px;color:#eeeeee;-webkit-text-stroke:0.2px #eeeeee;letter-spacing:1px">4:</div>
<div class="t" style="left:1007.5px;top:55px;font-size:15px;line-height:19px;color:#eeeeee;-webkit-text-stroke:0.2px #eeeeee;letter-spacing:1px">5:</div>
<div class="t" style="left:1007.5px;top:83px;font-size:15px;line-height:19px;color:#eeeeee;-webkit-text-stroke:0.2px #eeeeee;letter-spacing:1px">6:</div>
<div class="t" style="left:39px;top:570px;font-size:11px;line-height:16px;color:#45668f">2 - AFR 1 Pet</div>
<div class="t" style="left:119.5px;top:570px;font-size:11.3px;line-height:16px;color:#45668f">[ PIDDAQ, Analog, Lambda 1 (SK5.1) ]</div>
</body></html>
